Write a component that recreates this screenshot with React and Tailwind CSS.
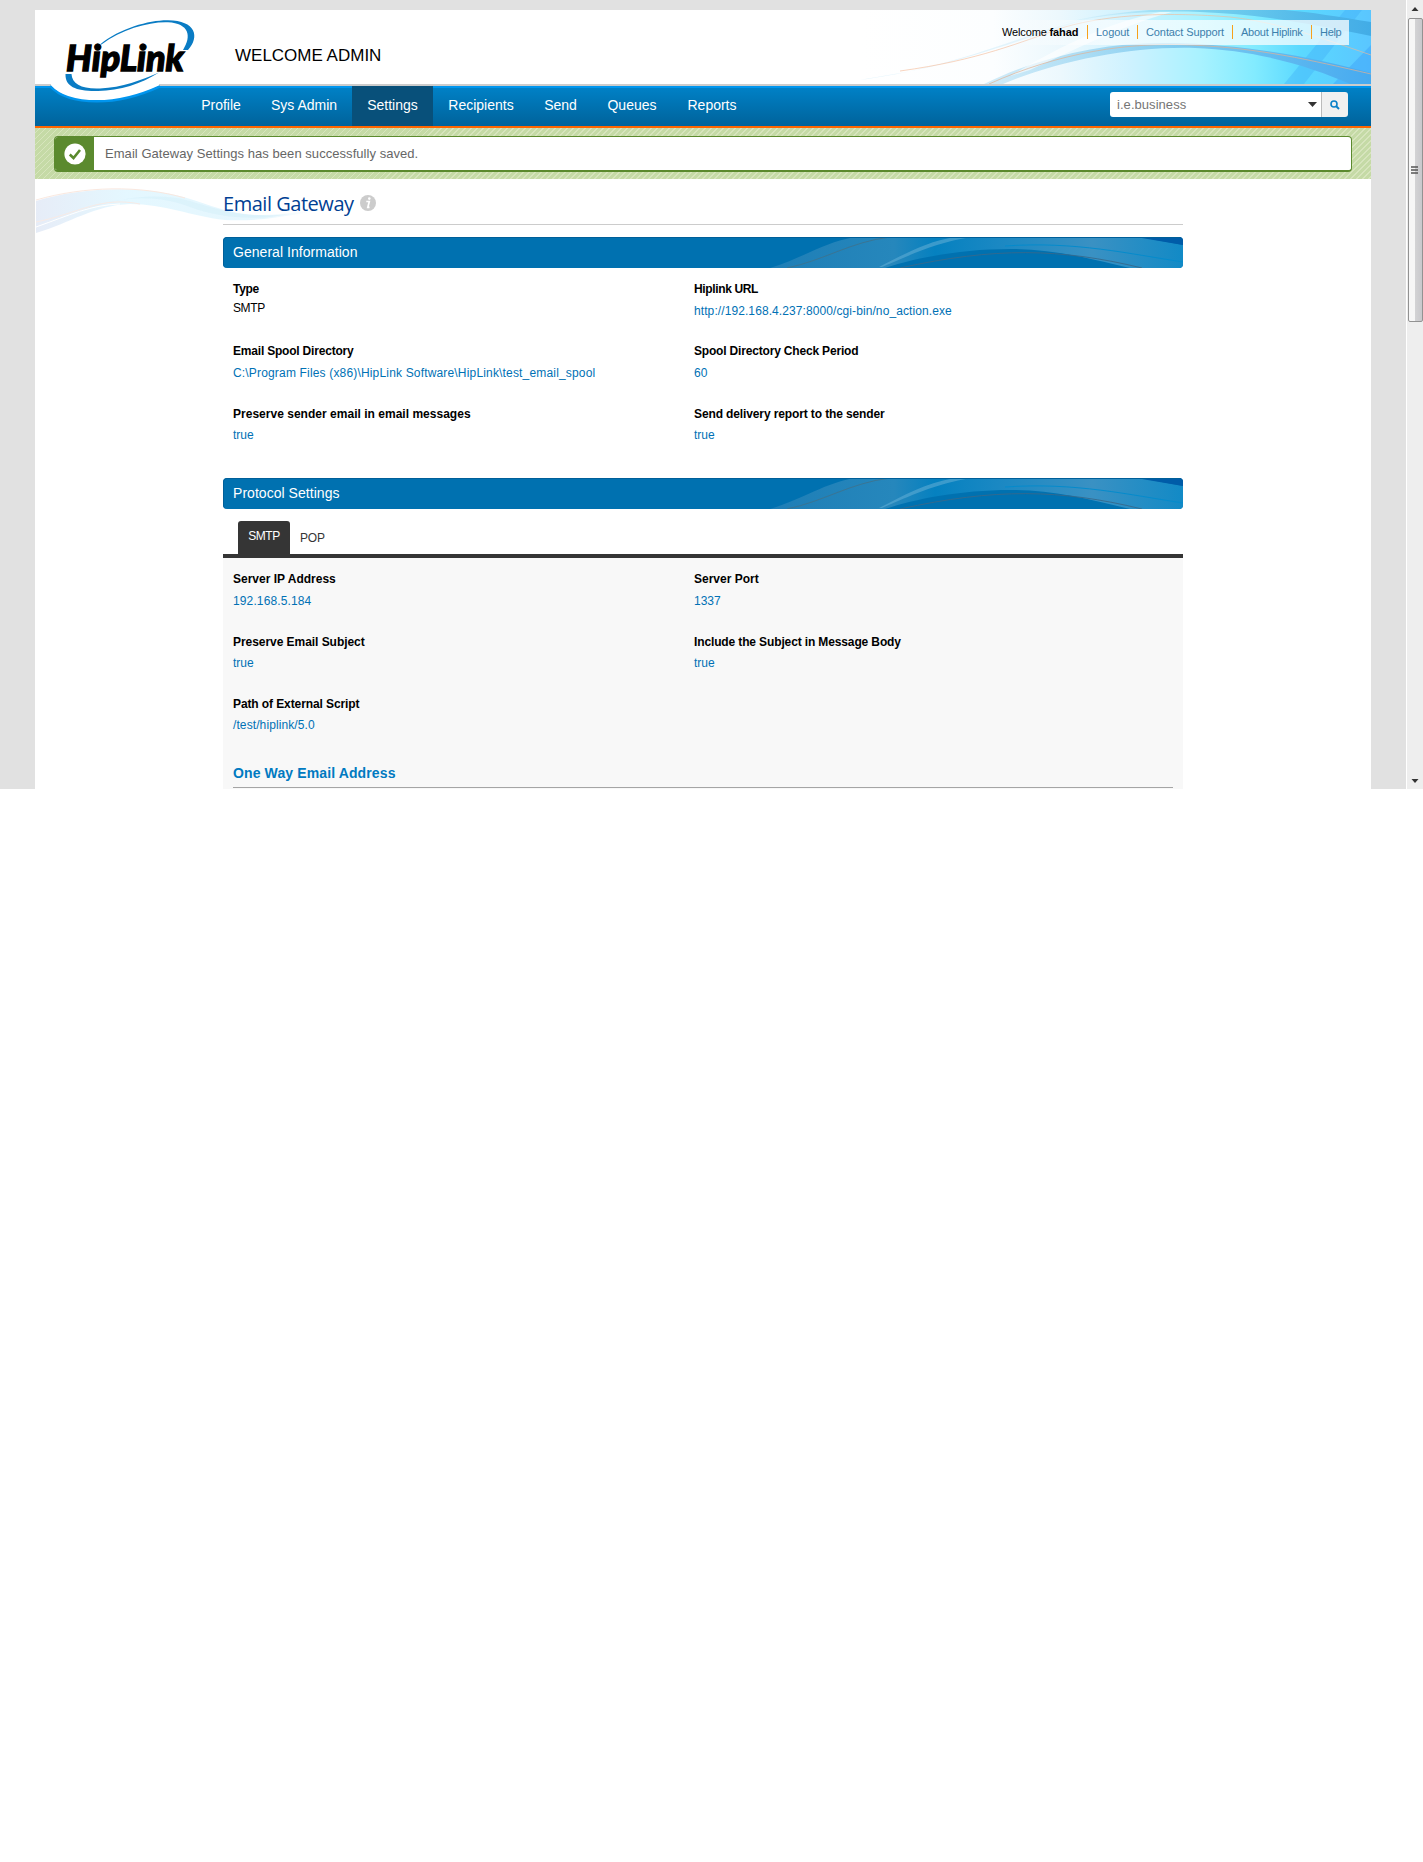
import React from "react";

const NAV = [
  { label: "Profile", w: "w-[70px]" },
  { label: "Sys Admin", w: "w-[96px]" },
  { label: "Settings", w: "w-[81px]", active: true },
  { label: "Recipients", w: "w-[96px]" },
  { label: "Send", w: "w-[63px]" },
  { label: "Queues", w: "w-[80px]" },
  { label: "Reports", w: "w-[80px]" },
];

const GENERAL = [
  { label: "Type", value: "SMTP", plain: true, lt: "tracking-[-0.3px]", vt: "tracking-[-0.4px]" },
  { label: "Hiplink URL", value: "http://192.168.4.237:8000/cgi-bin/no_action.exe", lt: "tracking-[-0.36px]", vt: "tracking-[0.09px]" },
  { label: "Email Spool Directory", value: "C:\\Program Files (x86)\\HipLink Software\\HipLink\\test_email_spool", lt: "tracking-[-0.2px]", vt: "tracking-[0.17px]" },
  { label: "Spool Directory Check Period", value: "60", lt: "tracking-[-0.18px]", vt: "tracking-normal" },
  { label: "Preserve sender email in email messages", value: "true", tight: true, lt: "tracking-[0.02px]", vt: "tracking-normal" },
  { label: "Send delivery report to the sender", value: "true", tight: true, lt: "tracking-[-0.12px]", vt: "tracking-normal" },
];

const SMTP = [
  { label: "Server IP Address", value: "192.168.5.184", lt: "tracking-normal", vt: "tracking-[0.12px]" },
  { label: "Server Port", value: "1337", lt: "tracking-normal", vt: "tracking-normal" },
  { label: "Preserve Email Subject", value: "true", tight: true, lt: "tracking-[-0.05px]", vt: "tracking-normal" },
  { label: "Include the Subject in Message Body", value: "true", tight: true, lt: "tracking-[-0.13px]", vt: "tracking-normal" },
  { label: "Path of External Script", value: "/test/hiplink/5.0", tight: true, lt: "tracking-[-0.1px]", vt: "tracking-[0.1px]" },
];

function Logo() {
  return (
    <svg className="absolute left-0 top-0" width="165" height="96" viewBox="35 10 165 96">
      <path d="M51 83V86C61 97 78 101 97 101C122 101 142 94 159 86V83Z" fill="#fff" />
      <path d="M50 86C60 97 78 101.300 97 101.300C122 101.300 142 94.500 160 86.300" fill="none" stroke="#0095ee" strokeWidth="2.400" />
      <path d="M100 44.500C120 28 150 20 168 20.300C196 20.500 200 37 188 50H183C192 36 189 23.500 168 22.300C150 21.500 122 29 101.500 44.500Z" fill="#0a7cc4" />
      <path d="M65.500 74H71.500C72 84 82 89.300 100 88.500C122 87.500 142 80 159 72.500C141 84 120 90.500 98 91C77 91.500 65 87 65.500 74Z" fill="#0a7cc4" />
      <text x="66" y="71" fontFamily="Lato" fontWeight="900" fontStyle="italic" fontSize="35.500" textLength="118" lengthAdjust="spacingAndGlyphs" fill="#000" stroke="#000" strokeWidth="1.300">HipLink</text>
    </svg>
  );
}

function HeaderWaves() {
  return (
    <svg className="absolute right-0 top-0" width="511" height="74" viewBox="860 10 511 74">
      <defs>
        <linearGradient id="sky" gradientUnits="userSpaceOnUse" x1="860" x2="1371" y1="20" y2="10">
          <stop offset="0" stopColor="#fff" />
          <stop offset="0.260" stopColor="#fcfeff" />
          <stop offset="0.390" stopColor="#ecf8fd" />
          <stop offset="0.530" stopColor="#cdf2ff" />
          <stop offset="0.665" stopColor="#a8f2ff" />
          <stop offset="0.770" stopColor="#82ebff" />
          <stop offset="0.860" stopColor="#5bd9ff" />
          <stop offset="1" stopColor="#5ac6ff" />
        </linearGradient>
        <linearGradient id="ribbon" gradientUnits="userSpaceOnUse" x1="980" x2="1371" y1="0" y2="0">
          <stop offset="0" stopColor="#b5e0f4" stopOpacity="0.550" />
          <stop offset="0.500" stopColor="#7cc8ee" stopOpacity="0.900" />
          <stop offset="1" stopColor="#46aaf0" />
        </linearGradient>
        <linearGradient id="upper" gradientUnits="userSpaceOnUse" x1="1040" x2="1371" y1="0" y2="0">
          <stop offset="0" stopColor="#bfe6f6" stopOpacity="0" />
          <stop offset="0.500" stopColor="#6cc8ea" stopOpacity="0.800" />
          <stop offset="1" stopColor="#42ace6" />
        </linearGradient>
      </defs>
      <rect x="860" y="10" width="511" height="74" fill="url(#sky)" />
      <path d="M1345 10L1284 84H1304L1362 10Z" fill="#3ba9f7" opacity="0.350" />
      <path d="M1371 45L1333 84H1371Z" fill="#3ba0f8" opacity="0.450" />
      <path d="M860 80C950 68 1010 40 1060 26C1090 17 1120 12 1150 10H1130C1080 16 1010 48 930 67C905 73 880 76 860 80Z" fill="#d5f0fb" opacity="0.700" />
      <path d="M1040 30C1090 14 1150 10 1200 12C1260 14 1310 24 1371 36V22C1340 17 1310 12 1285 10H1150C1100 14 1070 20 1040 30Z" fill="url(#upper)" />
      <path d="M984 84C1045 54 1110 42 1170 43C1240 44 1310 56 1371 73V84H1350C1310 66 1255 50 1195 48C1130 46 1055 62 1003 84Z" fill="url(#ribbon)" />
      <path d="M1010 76C1060 46 1110 22 1160 12H1172C1120 26 1070 52 1030 70Z" fill="#fff" opacity="0.600" />
      <path d="M900 71C980 60 1020 42 1065 27C1110 14 1170 12 1230 17C1275 22 1310 34 1371 55" fill="none" stroke="#f4b996" strokeWidth="1" opacity="0.600" />
      <path d="M989 84C1060 52 1130 42 1190 45C1260 48 1310 60 1371 74" fill="none" stroke="#e0b295" strokeWidth="1" opacity="0.700" />
    </svg>
  );
}

function SideWaves() {
  return (
    <svg className="absolute left-px top-0" width="310" height="60" viewBox="36 178 310 60">
      <defs>
        <linearGradient id="sideA" x1="0" x2="1">
          <stop offset="0" stopColor="#e2e9f6" />
          <stop offset="0.300" stopColor="#dff6ff" />
          <stop offset="0.750" stopColor="#e2f5fd" />
          <stop offset="1" stopColor="#fff" stopOpacity="0" />
        </linearGradient>
      </defs>
      <path d="M36 200C75 188 125 185 165 192C205 199 222 214 262 214C290 214 310 208 340 206C295 213 265 221 225 219C190 215 165 203 130 203C95 204 70 222 36 232Z" fill="url(#sideA)" opacity="0.850" />
      <path d="M76 212C115 194 158 193 190 206C220 217 255 220 290 213C245 218 220 209 190 200C155 190 110 198 76 212Z" fill="#d0edf8" opacity="0.450" />
      <path d="M36 199C85 185 140 184 185 197" fill="none" stroke="#fae8df" />
      <path d="M36 221C80 212 100 195 140 203" fill="none" stroke="#f8ebe6" />
      <path d="M36 226C70 214 90 204 120 203" fill="none" stroke="#fff" />
    </svg>
  );
}

function SectionBar({ id, children }) {
  return (
    <div className="relative h-[31px] overflow-hidden rounded-[4px] bg-[#0071b0] text-white">
      <svg className="absolute right-0 top-0" width="420" height="31" viewBox="763 237 420 31">
        <defs>
          <linearGradient id={id} gradientUnits="userSpaceOnUse" x1="770" x2="1183" y1="0" y2="0">
            <stop offset="0" stopColor="#1e7eb6" />
            <stop offset="0.300" stopColor="#2687bc" />
            <stop offset="0.400" stopColor="#0581c0" />
            <stop offset="0.550" stopColor="#1a88c3" />
            <stop offset="0.780" stopColor="#3a91c3" />
            <stop offset="1" stopColor="#128ac6" />
          </linearGradient>
        </defs>
        <path d="M770 268C805 257 825 242 855 237H1140L1183 245V268H1130C1085 257 1050 249 1010 249C960 249 915 258 885 268Z" fill={"url(#" + id + ")"} />
        <path d="M879 267C905 254 925 242 955 237H971C935 243 910 255 882 267Z" fill="#5eabd3" opacity="0.600" />
        <path d="M787 268C825 260 850 242 890 237" fill="none" stroke="#456f82" strokeWidth="0.700" />
        <path d="M900 268C995 247 1060 248 1142 268" fill="none" stroke="#37698b" strokeWidth="0.900" />
        <path d="M1005 246C1075 241 1130 254 1183 262" fill="none" stroke="#058bcc" />
        <path d="M1136 237H1183V245Z" fill="#005ca8" />
      </svg>
      <div className="pointer-events-none absolute inset-0 rounded-[4px] border-l border-t border-[#005f99]" />
      <h2 className="relative pl-[10px] text-[14px] leading-[30px] tracking-[0.04px]">{children}</h2>
    </div>
  );
}

function Field({ label, value, plain, tight, lt, vt }) {
  const gap = plain ? "pt-0 text-black" : tight ? "pt-[2px] text-[#0071b5]" : "pt-[3px] text-[#0071b5]";
  return (
    <div className="text-[12px] leading-[18px]">
      <div className={"h-[19px] font-bold text-black " + lt}>{label}</div>
      <div className={gap + " " + vt}>{value}</div>
    </div>
  );
}

function Scrollbar() {
  return (
    <div className="flex h-[789px] w-[17px] flex-col items-center border-l border-white bg-[#eee]">
      <svg width="16" height="18" viewBox="0 0 16 18"><path d="M4.500 11L8 7L11.500 11Z" fill="#333" /></svg>
      <div className="flex h-[304px] w-[15px] items-center justify-center rounded-[2px] border border-[#929292] bg-gradient-to-r from-[#f6f6f6] from-45% via-[#d2d2d4] via-50% to-[#c8c8cc]">
        <svg width="8" height="9" viewBox="0 0 8 9"><path d="M0 1H7M0 4H7M0 7H7" stroke="#555" strokeWidth="1.400" /></svg>
      </div>
      <div className="grow" />
      <svg width="16" height="18" viewBox="0 0 16 18"><path d="M4.500 8L8 12L11.500 8Z" fill="#333" /></svg>
    </div>
  );
}

export default function App() {
  return (
    <div className="h-[1862px] w-[1423px] bg-white font-['Liberation_Sans',Arial,sans-serif]">
      <div className="flex h-[789px] overflow-hidden bg-[#e1e1e1]">
        <div className="ml-[35px] mr-[35px] mt-[10px] w-[1336px] shrink-0 bg-white">
          <header className="relative h-[118px]">
            <div className="relative flex h-[74px] justify-between">
              <HeaderWaves />
              <h1 className="relative ml-[200px] mt-[35px] text-[17px] leading-[22px] text-black">WELCOME ADMIN</h1>
              <div className="relative mr-[22px] mt-[10px] flex h-[25px] items-start bg-gradient-to-r from-white/0 via-white/65 via-30% to-white/75 pt-[5px] text-[11px] leading-[14px] text-[#3c80ac]">
                <span className="w-[85px] whitespace-nowrap tracking-[-0.14px] text-black">Welcome <b>fahad</b></span>
                <a className="w-[50px] border-l border-[#f7a11b] pl-[8px] tracking-[-0.05px]">Logout</a>
                <a className="w-[95px] whitespace-nowrap border-l border-[#f7a11b] pl-[8px] tracking-[-0.1px]">Contact Support</a>
                <a className="w-[79px] whitespace-nowrap border-l border-[#f7a11b] pl-[8px] tracking-[-0.25px]">About Hiplink</a>
                <a className="w-[38px] border-l border-[#f7a11b] pl-[8px] tracking-[-0.3px]">Help</a>
              </div>
            </div>
            <div className="h-[2px] bg-[#ccc]" />
            <nav className="flex h-[42px] border-b-2 border-[#ff6600] bg-gradient-to-b from-[#0082c8] to-[#00639b] text-[14px] text-white">
              <div className="w-[151px] border-t-2 border-[#0095ed]" />
              {NAV.map((n) => (
                <a key={n.label} className={n.w + " flex h-[40px] items-center justify-center " + (n.active ? "bg-[#08507a] pb-px" : "border-t-2 border-[#0095ed] pb-[3px]")}>{n.label}</a>
              ))}
              <div className="grow border-t-2 border-[#0095ed]" />
              <div className="flex w-[261px] border-t-2 border-[#0095ed] pt-[4px]">
                <div className="flex h-[25px] w-[211px] items-center justify-between rounded-l-[3px] bg-white pl-[7px] pr-[4px] text-[13px] tracking-[0.050px] text-[#757575]">
                  <span>i.e.business</span>
                  <svg width="9" height="5" viewBox="0 0 9 5"><path d="M0 0H9L4.500 5Z" fill="#333" /></svg>
                </div>
                <div className="flex h-[25px] w-[27px] items-center justify-center rounded-r-[3px] border-l border-[#bbb] bg-[#f0f0f0]">
                  <svg width="10" height="10" viewBox="0 0 10 10"><circle cx="4" cy="4" r="3" fill="none" stroke="#0a80c8" strokeWidth="1.600" /><path d="M6 6L9 9" stroke="#0a80c8" strokeWidth="1.900" /></svg>
                </div>
              </div>
            </nav>
            <Logo />
          </header>
          <div className="h-[51px] bg-[repeating-linear-gradient(135deg,#c5daa6_0px,#c5daa6_3px,#d7e5bd_3px,#d7e5bd_4.240px)] pl-[19px] pr-[19px] pt-[8px]">
            <div className="flex h-[36px] items-stretch overflow-hidden rounded-[4px] border border-b-2 border-[#5b8a2e] bg-white">
              <div className="flex w-[39px] items-center justify-center bg-[#5b8a2e]">
                <svg width="22" height="22" viewBox="0 0 22 22"><circle cx="11" cy="11" r="10.600" fill="#fff" /><path d="M5.800 11.500L9.500 15L16 7" fill="none" stroke="#5b8a2e" strokeWidth="2.600" /></svg>
              </div>
              <p className="pl-[11px] text-[13px] leading-[33px] tracking-[0.050px] text-[#666]">Email Gateway Settings has been successfully saved.</p>
            </div>
          </div>
          <main className="relative">
            <SideWaves />
            <div className="relative ml-[188px] w-[960px]">
              <div className="flex h-[46px] items-start border-b border-[#ccc] pt-[12px]">
                <h2 className="w-[131px] whitespace-nowrap font-['Open_Sans',sans-serif] text-[20px] leading-[26px] tracking-[-0.470px] text-[#004093]">Email Gateway</h2>
                <svg className="ml-[6px] mt-[4px]" width="16" height="16" viewBox="0 0 16 16"><circle cx="8" cy="8" r="8" fill="#ccc" /><path d="M6.300 6.500H9.300L7.800 12.300H9.500" fill="none" stroke="#fff" strokeWidth="1.700" /><circle cx="9.300" cy="3.600" r="1.300" fill="#fff" /></svg>
              </div>
              <div className="h-[12px]" />
              <SectionBar id="barOne">General Information</SectionBar>
              <div className="grid h-[210px] grid-cols-[461px_1fr] grid-rows-[62px_63px_62px] pl-[10px] pt-[12px]">
                {GENERAL.map((f) => <Field key={f.label} {...f} />)}
              </div>
              <SectionBar id="barTwo">Protocol Settings</SectionBar>
              <div className="flex h-[49px] items-start border-b-4 border-[#353535] pl-[15px] pt-[12px] text-[12px]">
                <div className="h-[33px] w-[52px] rounded-t-[3px] bg-[#353535] text-center leading-[31px] tracking-[-0.400px] text-white">SMTP</div>
                <div className="pl-[10px] pt-[2px] leading-[31px] tracking-[-0.200px] text-[#353535]">POP</div>
              </div>
              <div className="h-[231px] bg-[#f8f8f8] px-[10px] pt-[12px]">
                <div className="grid h-[188px] grid-cols-[461px_1fr] grid-rows-[63px_62px_62px]">
                  {SMTP.map((f) => <Field key={f.label} {...f} />)}
                </div>
                <h3 className="h-[30px] border-b border-[#a5a5a5] pt-[6px] text-[14px] font-bold leading-[18px] tracking-[0.120px] text-[#007ac1]">One Way Email Address</h3>
              </div>
            </div>
          </main>
        </div>
        <Scrollbar />
      </div>
    </div>
  );
}
